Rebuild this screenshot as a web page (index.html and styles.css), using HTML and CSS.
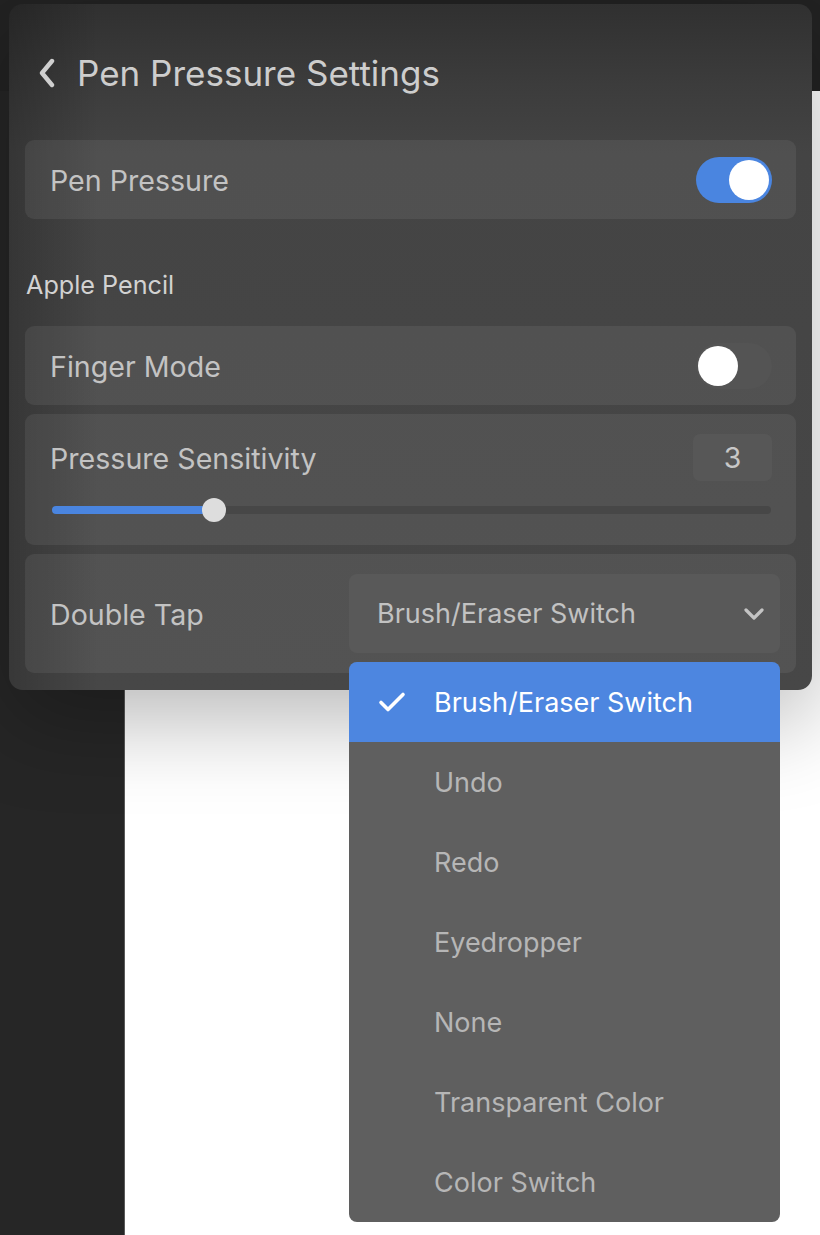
FILE: index.html
```html
<!DOCTYPE html>
<html lang="en">
<head>
<meta charset="utf-8">
<title>Pen Pressure Settings</title>
<link rel="stylesheet" href="styles.css">
</head>
<body>
<div class="app">
  <div class="topbar"></div>
  <div class="workspace">
    <div class="sidebar"></div>
    <div class="canvas"></div>
  </div>

  <section class="panel">
    <header class="panel-header">
      <svg class="back" width="20" height="30" viewBox="0 0 20 30" aria-hidden="true">
        <path d="M15 3 L5 15 L15 27" fill="none" stroke="#cfcfcf" stroke-width="4.4" stroke-linecap="round" stroke-linejoin="round"/>
      </svg>
      <h1 class="title">Pen Pressure Settings</h1>
    </header>

    <div class="card row">
      <span class="label">Pen Pressure</span>
      <span class="toggle on"><span class="knob"></span></span>
    </div>

    <div class="section-label">Apple Pencil</div>

    <div class="card row">
      <span class="label">Finger Mode</span>
      <span class="toggle off"><span class="knob"></span></span>
    </div>

    <div class="card slider-card">
      <div class="slider-head">
        <span class="label">Pressure Sensitivity</span>
        <span class="value">3</span>
      </div>
      <div class="slider">
        <div class="fill" style="width:22.5%"><span class="thumb"></span></div>
      </div>
    </div>

    <div class="card row tap-card">
      <span class="label">Double Tap</span>
      <div class="select">
        <span class="select-text">Brush/Eraser Switch</span>
        <svg class="caret" width="22" height="14" viewBox="0 0 22 14" aria-hidden="true">
          <path d="M3 3 L11 11 L19 3" fill="none" stroke="#c4c4c4" stroke-width="3.2" stroke-linecap="round" stroke-linejoin="round"/>
        </svg>
        <ul class="menu">
          <li class="item selected">
            <svg class="check" width="28" height="22" viewBox="0 0 28 22" aria-hidden="true">
              <path d="M3 11.5 L10 18.5 L25 3.5" fill="none" stroke="#ffffff" stroke-width="3.6" stroke-linecap="round" stroke-linejoin="round"/>
            </svg>
            <span>Brush/Eraser Switch</span>
          </li>
          <li class="item"><span>Undo</span></li>
          <li class="item"><span>Redo</span></li>
          <li class="item"><span>Eyedropper</span></li>
          <li class="item"><span>None</span></li>
          <li class="item"><span>Transparent Color</span></li>
          <li class="item"><span>Color Switch</span></li>
        </ul>
      </div>
    </div>
  </section>
</div>
</body>
</html>
```
FILE: styles.css
```css
* { box-sizing: border-box; }

html, body {
  margin: 0;
  padding: 0;
}

body {
  width: 820px;
  height: 1235px;
  overflow: hidden;
  background: #222222;
  font-family: Inter, "Noto Sans", "Liberation Sans", sans-serif;
}

.app {
  position: relative;
  width: 820px;
  height: 1235px;
  display: grid;
  grid-template-rows: 91px 1fr;
}

.topbar {
  background: #222222;
}

.workspace {
  display: flex;
}

.sidebar {
  width: 125px;
  background: #262626;
  border-right: 1px solid #5a5a5a;
}

.canvas {
  flex: 1;
  background: #ffffff;
}

/* Popover panel */
.panel {
  position: absolute;
  left: 9px;
  top: 4px;
  width: 803px;
  height: 686px;
  border-radius: 14px;
  padding: 0 16px 17px;
  display: flex;
  flex-direction: column;
  background:
    linear-gradient(90deg, rgba(0,0,0,0.22) 0px, rgba(0,0,0,0) 90px),
    linear-gradient(180deg, #303030 0px, #3c3c3c 80px, #444444 150px, #474747 100%);
  box-shadow: 0 30px 90px rgba(0,0,0,0.28);
}

.panel-header {
  height: 136px;
  display: flex;
  align-items: center;
  gap: 19px;
  padding-left: 12px;
  padding-top: 2px;
}

.back { display: block; }

.title {
  margin: 0;
  font-size: 35px;
  font-weight: 400;
  color: #cdcdcd;
  margin-left: 1px;
}

.card {
  background: rgba(255,255,255,0.065);
  border-radius: 9px;
}

.row {
  height: 79px;
  display: flex;
  align-items: center;
  justify-content: space-between;
  padding: 2px 24px 0 25px;
}

.label {
  font-size: 28.6px;
  color: #c3c3c3;
}

.section-label {
  height: 107px;
  display: flex;
  align-items: center;
  padding-left: 1px;
  padding-top: 25px;
  font-size: 25.2px;
  color: #d2d2d2;
}

.section-label + .card { margin-bottom: 9px; }

.toggle {
  position: relative;
  width: 76px;
  height: 46px;
  border-radius: 23px;
  display: block;
  margin-top: -2px;
}

.toggle.on { background: #4a85e0; }
.toggle.off { background: #545454; }

.toggle .knob {
  position: absolute;
  top: 3px;
  width: 40px;
  height: 40px;
  border-radius: 50%;
  background: #ffffff;
}

.toggle.on .knob { right: 3px; }
.toggle.off .knob { left: 2px; }

.slider-card {
  height: 131px;
  padding: 20px 24px 0 25px;
  margin-bottom: 9px;
}

.slider-head {
  display: flex;
  align-items: center;
  justify-content: space-between;
  height: 47px;
}

.slider-head .label { margin-top: 2px; }

.value {
  width: 79px;
  height: 47px;
  border-radius: 7px;
  background: #575757;
  color: #c8c8c8;
  font-size: 28.5px;
  display: flex;
  align-items: center;
  justify-content: center;
}

.slider {
  margin: 25px 1px 0 2px;
  height: 8px;
  border-radius: 4px;
  background: #474747;
}

.fill {
  position: relative;
  height: 8px;
  border-radius: 4px;
  background: #4a85e0;
}

.thumb {
  position: absolute;
  right: -12px;
  top: -8px;
  width: 24px;
  height: 24px;
  border-radius: 50%;
  background: #dddddd;
}

.tap-card {
  height: 119px;
  padding-right: 16px;
}

.tap-card .select { margin-top: -2px; }

.select {
  position: relative;
  width: 431px;
  height: 79px;
  border-radius: 8px;
  background: #595959;
  display: flex;
  align-items: center;
  justify-content: space-between;
  padding: 0 15px 0 28px;
}

.select-text {
  font-size: 27px;
  color: #c2c2c2;
}

.caret { display: block; }

.menu {
  position: absolute;
  left: 0;
  right: 0;
  top: calc(100% + 9px);
  margin: 0;
  padding: 0;
  list-style: none;
  border-radius: 8px;
  overflow: hidden;
  background: #5f5f5f;
  z-index: 2;
}

.item {
  height: 80px;
  display: flex;
  align-items: center;
  padding-left: 85px;
  position: relative;
  font-size: 27px;
  color: #b6b6b6;
}

.item.selected {
  background: #4d86e0;
  color: #ffffff;
}

.check {
  position: absolute;
  left: 29px;
  top: 29px;
}
```
